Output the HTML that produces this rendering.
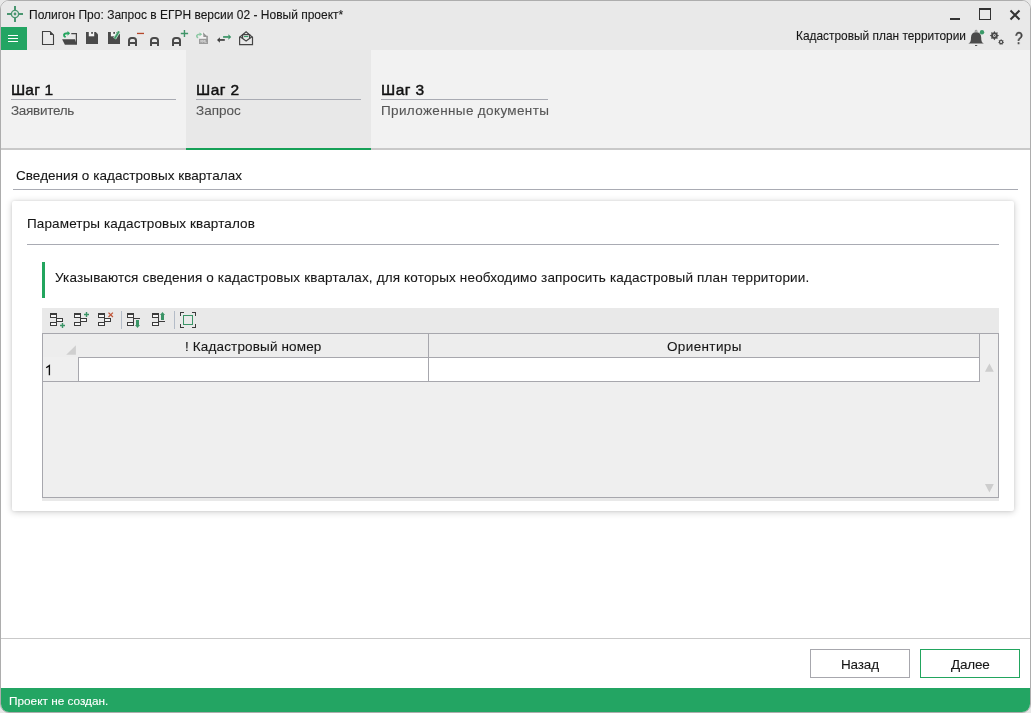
<!DOCTYPE html>
<html><head><meta charset="utf-8">
<style>
html,body{margin:0;padding:0;}
body{-webkit-font-smoothing:antialiased;width:1031px;height:713px;overflow:hidden;background:#e8e8e8;position:relative;font-family:"Liberation Sans",sans-serif;}
#win{position:absolute;left:0;top:0;width:1029px;height:711px;border:1px solid #adadad;border-radius:9px;overflow:hidden;background:#fff;}
.a{position:absolute;}
.t{position:absolute;white-space:nowrap;line-height:1;will-change:transform;-webkit-text-stroke:0.1px currentColor;}
svg{position:absolute;overflow:visible;}
</style></head><body>
<div id="win">
  <!-- title + toolbar bg -->
  <div class="a" style="left:0;top:0;width:1029px;height:49px;background:#e9e9e9;"></div>
  <!-- tab strip -->
  <div class="a" style="left:0;top:49px;width:1029px;height:98px;background:#f2f2f2;"></div>
  <div class="a" style="left:185px;top:49px;width:185px;height:98px;background:#e8e8e8;"></div>
  <div class="a" style="left:0;top:147px;width:1029px;height:2px;background:#c9c9c9;"></div>
  <div class="a" style="left:185px;top:147px;width:185px;height:2px;background:#16a057;"></div>
  <!-- status bar -->
  <div class="a" style="left:0;top:687px;width:1029px;height:24px;background:#23a563;"></div>
</div>
<!-- texts (coordinates are page coords) -->
<div class="t" id="title" style="left:29px;top:9px;font-size:12px;color:#161616;">Полигон Про: Запрос в ЕГРН версии 02 - Новый проект*</div>
<div class="t" id="kpt" style="left:796px;top:31px;font-size:11.9px;color:#161616;">Кадастровый план территории</div>

<div class="t" style="left:11px;top:82px;font-size:15.5px;letter-spacing:0.15px;-webkit-text-stroke:0.45px #111;color:#111;">Шаг 1</div>
<div class="t" style="left:196px;top:82px;font-size:15.5px;letter-spacing:0.45px;-webkit-text-stroke:0.45px #111;color:#111;">Шаг 2</div>
<div class="t" style="left:381px;top:82px;font-size:15.5px;letter-spacing:0.45px;-webkit-text-stroke:0.45px #111;color:#111;">Шаг 3</div>
<div class="a" style="left:11px;top:99px;width:165px;height:1px;background:#a9abb3;"></div>
<div class="a" style="left:196px;top:99px;width:165px;height:1px;background:#a9abb3;"></div>
<div class="a" style="left:381px;top:99px;width:167px;height:1px;background:#a9abb3;"></div>
<div class="t" style="left:11px;top:104px;font-size:13.5px;letter-spacing:-0.3px;color:#555;">Заявитель</div>
<div class="t" style="left:196px;top:104px;font-size:13.5px;color:#555;">Запрос</div>
<div class="t" style="left:381px;top:104px;font-size:13.5px;letter-spacing:0.36px;color:#555;">Приложенные документы</div>

<div class="t" style="left:16px;top:169px;font-size:13.5px;letter-spacing:0.05px;color:#161616;">Сведения о кадастровых кварталах</div>
<div class="a" style="left:13px;top:189px;width:1005px;height:1px;background:#a9abb3;"></div>

<!-- card -->
<div class="a" style="left:12px;top:201px;width:1002px;height:310px;background:#fff;border-radius:2px;box-shadow:0 1px 7px rgba(0,0,0,0.2),0 0 3px rgba(0,0,0,0.08);"></div>
<div class="t" style="left:27px;top:217px;font-size:13.5px;letter-spacing:0.13px;color:#161616;">Параметры кадастровых кварталов</div>
<div class="a" style="left:27px;top:244px;width:972px;height:1px;background:#a9abb3;"></div>
<div class="a" style="left:42px;top:262px;width:3px;height:36px;background:#22a55e;"></div>
<div class="t" style="left:55px;top:271px;font-size:13.5px;letter-spacing:0.155px;color:#161616;">Указываются сведения о кадастровых кварталах, для которых необходимо запросить кадастровый план территории.</div>

<!-- grid -->
<div class="a" style="left:42px;top:308px;width:957px;height:193px;background:#e9e9e9;"></div>
<div class="a" style="left:42px;top:333px;width:955px;height:163px;background:#efefef;border:1px solid #a7a7ad;"></div>
<div class="a" style="left:43px;top:334px;width:936px;height:23px;background:#ededed;"></div>
<div class="a" style="left:78px;top:357px;width:901px;height:24px;background:#fff;"></div>
<div class="a" style="left:78px;top:357px;width:901px;height:1px;background:#a7a7ad;"></div>
<div class="a" style="left:43px;top:381px;width:936px;height:1px;background:#a7a7ad;"></div>
<div class="a" style="left:78px;top:357px;width:1px;height:25px;background:#a7a7ad;"></div>
<div class="a" style="left:428px;top:334px;width:1px;height:48px;background:#a7a7ad;"></div>
<div class="a" style="left:979px;top:334px;width:1px;height:48px;background:#a7a7ad;"></div>
<div class="t" style="left:185px;top:340px;font-size:13.5px;letter-spacing:0.15px;color:#161616;">! Кадастровый номер</div>
<div class="t" style="left:667px;top:340px;font-size:13.5px;letter-spacing:0.37px;color:#161616;">Ориентиры</div>
<svg width="1031" height="713" viewBox="0 0 1031 713" style="left:0;top:0;"><path d="M49.4,375.2V365.6L46.2,367.8" fill="none" stroke="#111" stroke-width="1.35"/></svg>

<!-- bottom -->
<div class="a" style="left:1px;top:638px;width:1029px;height:1px;background:#c9c9c9;"></div>
<div class="a" style="left:810px;top:649px;width:98px;height:27px;background:#fff;border:1px solid #a7a7ad;"></div>
<div class="a" style="left:920px;top:649px;width:98px;height:27px;background:#fff;border:1px solid #22a55e;"></div>
<div class="t" style="left:841px;top:658px;font-size:13.5px;letter-spacing:-0.15px;color:#161616;">Назад</div>
<div class="t" style="left:951px;top:658px;font-size:13.5px;letter-spacing:-0.2px;color:#161616;">Далее</div>
<div class="t" style="left:9px;top:696px;font-size:11.8px;color:#fff;">Проект не создан.</div>

<svg width="1031" height="713" viewBox="0 0 1031 713" style="left:0;top:0;">
 <!-- app icon -->
 <g stroke="#4a9670" fill="none">
  <circle cx="15" cy="14" r="3.6" stroke-width="1.4"/>
  <path d="M7,14H11.4M18.6,14H23M15,6V10.4M15,17.6V22" stroke-width="2"/>
 </g>
 <circle cx="15" cy="14" r="1.4" fill="#4a9670"/>
 <!-- hamburger -->
 <rect x="1" y="27" width="26" height="23" fill="#23a563"/>
 <rect x="8" y="35" width="10" height="1" fill="#fff"/>
 <rect x="8" y="38" width="10" height="1" fill="#fff"/>
 <rect x="8" y="41" width="10" height="1" fill="#fff"/>
 <!-- window controls -->
 <rect x="950" y="18" width="10" height="2" fill="#333"/>
 <rect x="979.5" y="8.5" width="11" height="11" fill="none" stroke="#333" stroke-width="1"/>
 <rect x="979" y="8" width="12" height="2" fill="#333"/>
 <path d="M1010.5,10.5L1019.5,19.5M1019.5,10.5L1010.5,19.5" stroke="#333" stroke-width="2"/>
 <!-- new doc -->
 <path d="M42.5,31.5H50L53.5,35V44.5H42.5Z" fill="none" stroke="#404040" stroke-width="1.1"/>
 <path d="M50,31.5L53.6,35.1H50Z" fill="#404040"/>
 <!-- open -->
 <path d="M71.3,33.6H76.4V44.6" fill="none" stroke="#474747" stroke-width="1.2"/>
 <path d="M62.1,39.3H75L76.8,44.8H64.9Z" fill="#474747"/>
 <path d="M65.6,37.2C63.3,35.8 62.9,33.3 67.9,33.3" fill="none" stroke="#22a55e" stroke-width="1.9"/>
 <path d="M67.5,30.9L70.1,33.3L67.5,35.8Z" fill="#22a55e"/>
 <!-- save -->
 <path d="M86,32H95.8L98,34.2V44H86Z" fill="#4a4a4a"/>
 <rect x="88.8" y="32" width="5.4" height="4.3" fill="#f4f4f4"/>
 <rect x="91.2" y="32" width="1.7" height="1.8" fill="#4a4a4a"/>
 <!-- save as -->
 <path d="M108,32H117.8L120,34.2V44H108Z" fill="#4a4a4a"/>
 <rect x="110.9" y="32" width="5.2" height="4.3" fill="#f4f4f4"/>
 <rect x="113.3" y="32" width="1.7" height="1.8" fill="#4a4a4a"/>
 <path d="M119,31.4L114.6,38.6" stroke="#bfe0cc" stroke-width="3.2"/>
 <path d="M119,31.4L114.6,38.6" stroke="#3d9a68" stroke-width="1.8"/>
 <!-- A- A A+ -->
 <g fill="none" stroke="#4a4a4a" stroke-width="2">
  <path d="M129,46V40.5Q129,37.9 131.6,37.9H133.4Q136,37.9 136,40.5V46M129,43.1H136"/>
  <path d="M151,46V40.5Q151,37.9 153.6,37.9H155.4Q158,37.9 158,40.5V46M151,43.1H158"/>
  <path d="M173,46V40.5Q173,37.9 175.6,37.9H177.4Q180,37.9 180,40.5V46M173,43.1H180"/>
 </g>
 <rect x="137" y="32.8" width="7" height="1.3" fill="#b5472a"/>
 <path d="M180.8,33.5H188.1M184.45,29.9V37" stroke="#3f9468" stroke-width="1.4"/>
 <!-- xml (disabled) -->
 <rect x="199.5" y="32.3" width="6.8" height="6.6" fill="#f3f3f3"/>
 <path d="M203,32.2L207.9,36.9H203.4Z" fill="#969696"/>
 <rect x="206.3" y="35.8" width="1.6" height="8.2" fill="#9c9c9c"/>
 <rect x="199" y="38.8" width="8.9" height="5.2" fill="#9c9c9c"/>
 <path d="M200.4,40.1L201.8,42.4M201.8,40.1L200.4,42.4M202.6,42.6V40.1L203.5,41.6L204.4,40.1V42.6M205.2,40.1V42.4H206.6" fill="none" stroke="#dcdcdc" stroke-width="0.7"/>
 <path d="M198,37.9C195.9,36.6 196.3,34.2 199.9,34.2" fill="none" stroke="#8cc8a4" stroke-width="1.6"/>
 <path d="M199.5,32.2L202.3,34.2L199.5,36.2Z" fill="#8cc8a4"/>
 <!-- exchange arrows -->
 <rect x="223.1" y="36.1" width="5.6" height="1.7" fill="#3a9466"/>
 <path d="M228.4,34.2L231.2,36.95L228.4,39.7Z" fill="#3a9466"/>
 <rect x="219.5" y="39.1" width="5.3" height="1.7" fill="#3d3d3d"/>
 <path d="M219.9,37.2L217,39.95L219.9,42.7Z" fill="#3d3d3d"/>
 <!-- envelope -->
 <g fill="none" stroke="#454545" stroke-width="1.2">
  <path d="M239.6,37.2L246.1,31.7L252.5,37.2V44.6H239.6Z"/>
  <path d="M239.8,36.6L246.1,41L252.3,36.6"/>
  <path d="M242.6,38.5V34.6H249.6V38.5"/>
 </g>
 <rect x="244" y="36" width="4.3" height="1.1" fill="#3a9a68"/>
 <!-- bell -->
 <path d="M968.3,43.6C970.5,42.6 971,41 971,37.5C971,34 973,32.3 976.1,32.3C979.2,32.3 981.2,34 981.2,37.5C981.2,41 981.7,42.6 983.9,43.6Z" fill="#4a4a4a"/>
 <circle cx="976.1" cy="31.2" r="1" fill="none" stroke="#777" stroke-width="0.8"/>
 <rect x="975" y="45" width="2.2" height="1" fill="#555"/>
 <circle cx="982" cy="32.2" r="2.2" fill="#3a9a68"/>
</svg>
<svg width="1031" height="713" viewBox="0 0 1031 713" style="left:0;top:0;"><path d="M994.40,31.00 L995.62,32.64 L997.65,32.35 L997.36,34.38 L999.00,35.60 L997.36,36.82 L997.65,38.85 L995.62,38.56 L994.40,40.20 L993.18,38.56 L991.15,38.85 L991.44,36.82 L989.80,35.60 L991.44,34.38 L991.15,32.35 L993.18,32.64Z M995.8,35.6 A1.4,1.4 0 1,0 993.0,35.6 A1.4,1.4 0 1,0 995.8,35.6Z" fill="#4a4a4a" fill-rule="evenodd"/><circle cx="994.4" cy="35.6" r="0.7" fill="#4a4a4a"/><path d="M1001.10,39.10 L1002.01,40.21 L1003.45,40.23 L1003.15,41.63 L1004.02,42.77 L1002.74,43.41 L1002.40,44.80 L1001.10,44.20 L999.80,44.80 L999.46,43.41 L998.18,42.77 L999.05,41.63 L998.75,40.23 L1000.19,40.21Z M1002.1,42.1 A1.0,1.0 0 1,0 1000.1,42.1 A1.0,1.0 0 1,0 1002.1,42.1Z" fill="#4a4a4a" fill-rule="evenodd"/><g shape-rendering="crispEdges"><rect x="50" y="313" width="7" height="5" fill="#3c3c3c"/><rect x="51" y="315" width="5" height="2" fill="#f7f7f7"/><rect x="56" y="318" width="7" height="4" fill="#3c3c3c"/><rect x="57" y="319" width="5" height="2" fill="#f7f7f7"/><rect x="50" y="322" width="7" height="4" fill="#3c3c3c"/><rect x="51" y="323" width="5" height="2" fill="#f7f7f7"/><rect x="74" y="313" width="7" height="5" fill="#3c3c3c"/><rect x="75" y="315" width="5" height="2" fill="#f7f7f7"/><rect x="80" y="318" width="7" height="4" fill="#3c3c3c"/><rect x="81" y="319" width="5" height="2" fill="#f7f7f7"/><rect x="74" y="322" width="7" height="4" fill="#3c3c3c"/><rect x="75" y="323" width="5" height="2" fill="#f7f7f7"/><rect x="98" y="313" width="7" height="5" fill="#3c3c3c"/><rect x="99" y="315" width="5" height="2" fill="#f7f7f7"/><rect x="104" y="318" width="7" height="4" fill="#3c3c3c"/><rect x="105" y="319" width="5" height="2" fill="#f7f7f7"/><rect x="98" y="322" width="7" height="4" fill="#3c3c3c"/><rect x="99" y="323" width="5" height="2" fill="#f7f7f7"/><rect x="121" y="311" width="1" height="18" fill="#b4bcc8"/><rect x="174" y="311" width="1" height="18" fill="#b4bcc8"/><rect x="127" y="313" width="7" height="5" fill="#3c3c3c"/><rect x="128" y="315" width="5" height="2" fill="#f7f7f7"/><rect x="127" y="322" width="7" height="4" fill="#3c3c3c"/><rect x="128" y="323" width="5" height="2" fill="#f7f7f7"/><rect x="133" y="317" width="1" height="6" fill="#3c3c3c"/><rect x="133" y="318" width="7" height="1" fill="#3c3c3c"/><rect x="136" y="320" width="3" height="5" fill="#3a9466"/><rect x="152" y="313" width="7" height="5" fill="#3c3c3c"/><rect x="153" y="315" width="5" height="2" fill="#f7f7f7"/><rect x="152" y="322" width="7" height="4" fill="#3c3c3c"/><rect x="153" y="323" width="5" height="2" fill="#f7f7f7"/><rect x="158" y="317" width="1" height="6" fill="#3c3c3c"/><rect x="158" y="321" width="7" height="1" fill="#3c3c3c"/><rect x="161" y="315" width="3" height="5" fill="#3a9466"/><rect x="180" y="312" width="4" height="1" fill="#3c3c3c"/><rect x="180" y="312" width="1" height="4" fill="#3c3c3c"/><rect x="192" y="312" width="4" height="1" fill="#3c3c3c"/><rect x="195" y="312" width="1" height="4" fill="#3c3c3c"/><rect x="180" y="327" width="4" height="1" fill="#3c3c3c"/><rect x="180" y="324" width="1" height="4" fill="#3c3c3c"/><rect x="192" y="327" width="4" height="1" fill="#3c3c3c"/><rect x="195" y="324" width="1" height="4" fill="#3c3c3c"/><rect x="183" y="315" width="10" height="1" fill="#3a9466"/><rect x="183" y="324" width="10" height="1" fill="#3a9466"/><rect x="183" y="315" width="1" height="10" fill="#3a9466"/><rect x="192" y="315" width="1" height="10" fill="#3a9466"/></g><path d="M135,325H140L137.5,328Z" fill="#3a9466"/><path d="M160,315H165L162.5,312Z" fill="#3a9466"/><path d="M60,325.5H65M62.5,323V328" stroke="#3a9466" stroke-width="1.4"/><path d="M84,314.5H89M86.5,312V317" stroke="#3a9466" stroke-width="1.4"/><path d="M108.5,312.6L112.9,317M112.9,312.6L108.5,317" stroke="#c0573a" stroke-width="1.3"/><path d="M66.2,354.7H75.9V345.3Z" fill="#cfcfcf"/><path d="M985,371.7H993.8L989.4,363.6Z" fill="#cdcdcd"/><path d="M985,484H993.8L989.4,492.4Z" fill="#cdcdcd"/></svg>
<div class="t" style="left:1014.5px;top:30.5px;font-size:16px;transform:scaleX(0.86);transform-origin:0 0;-webkit-text-stroke:0.45px #444;color:#444;">?</div>
</body></html>
